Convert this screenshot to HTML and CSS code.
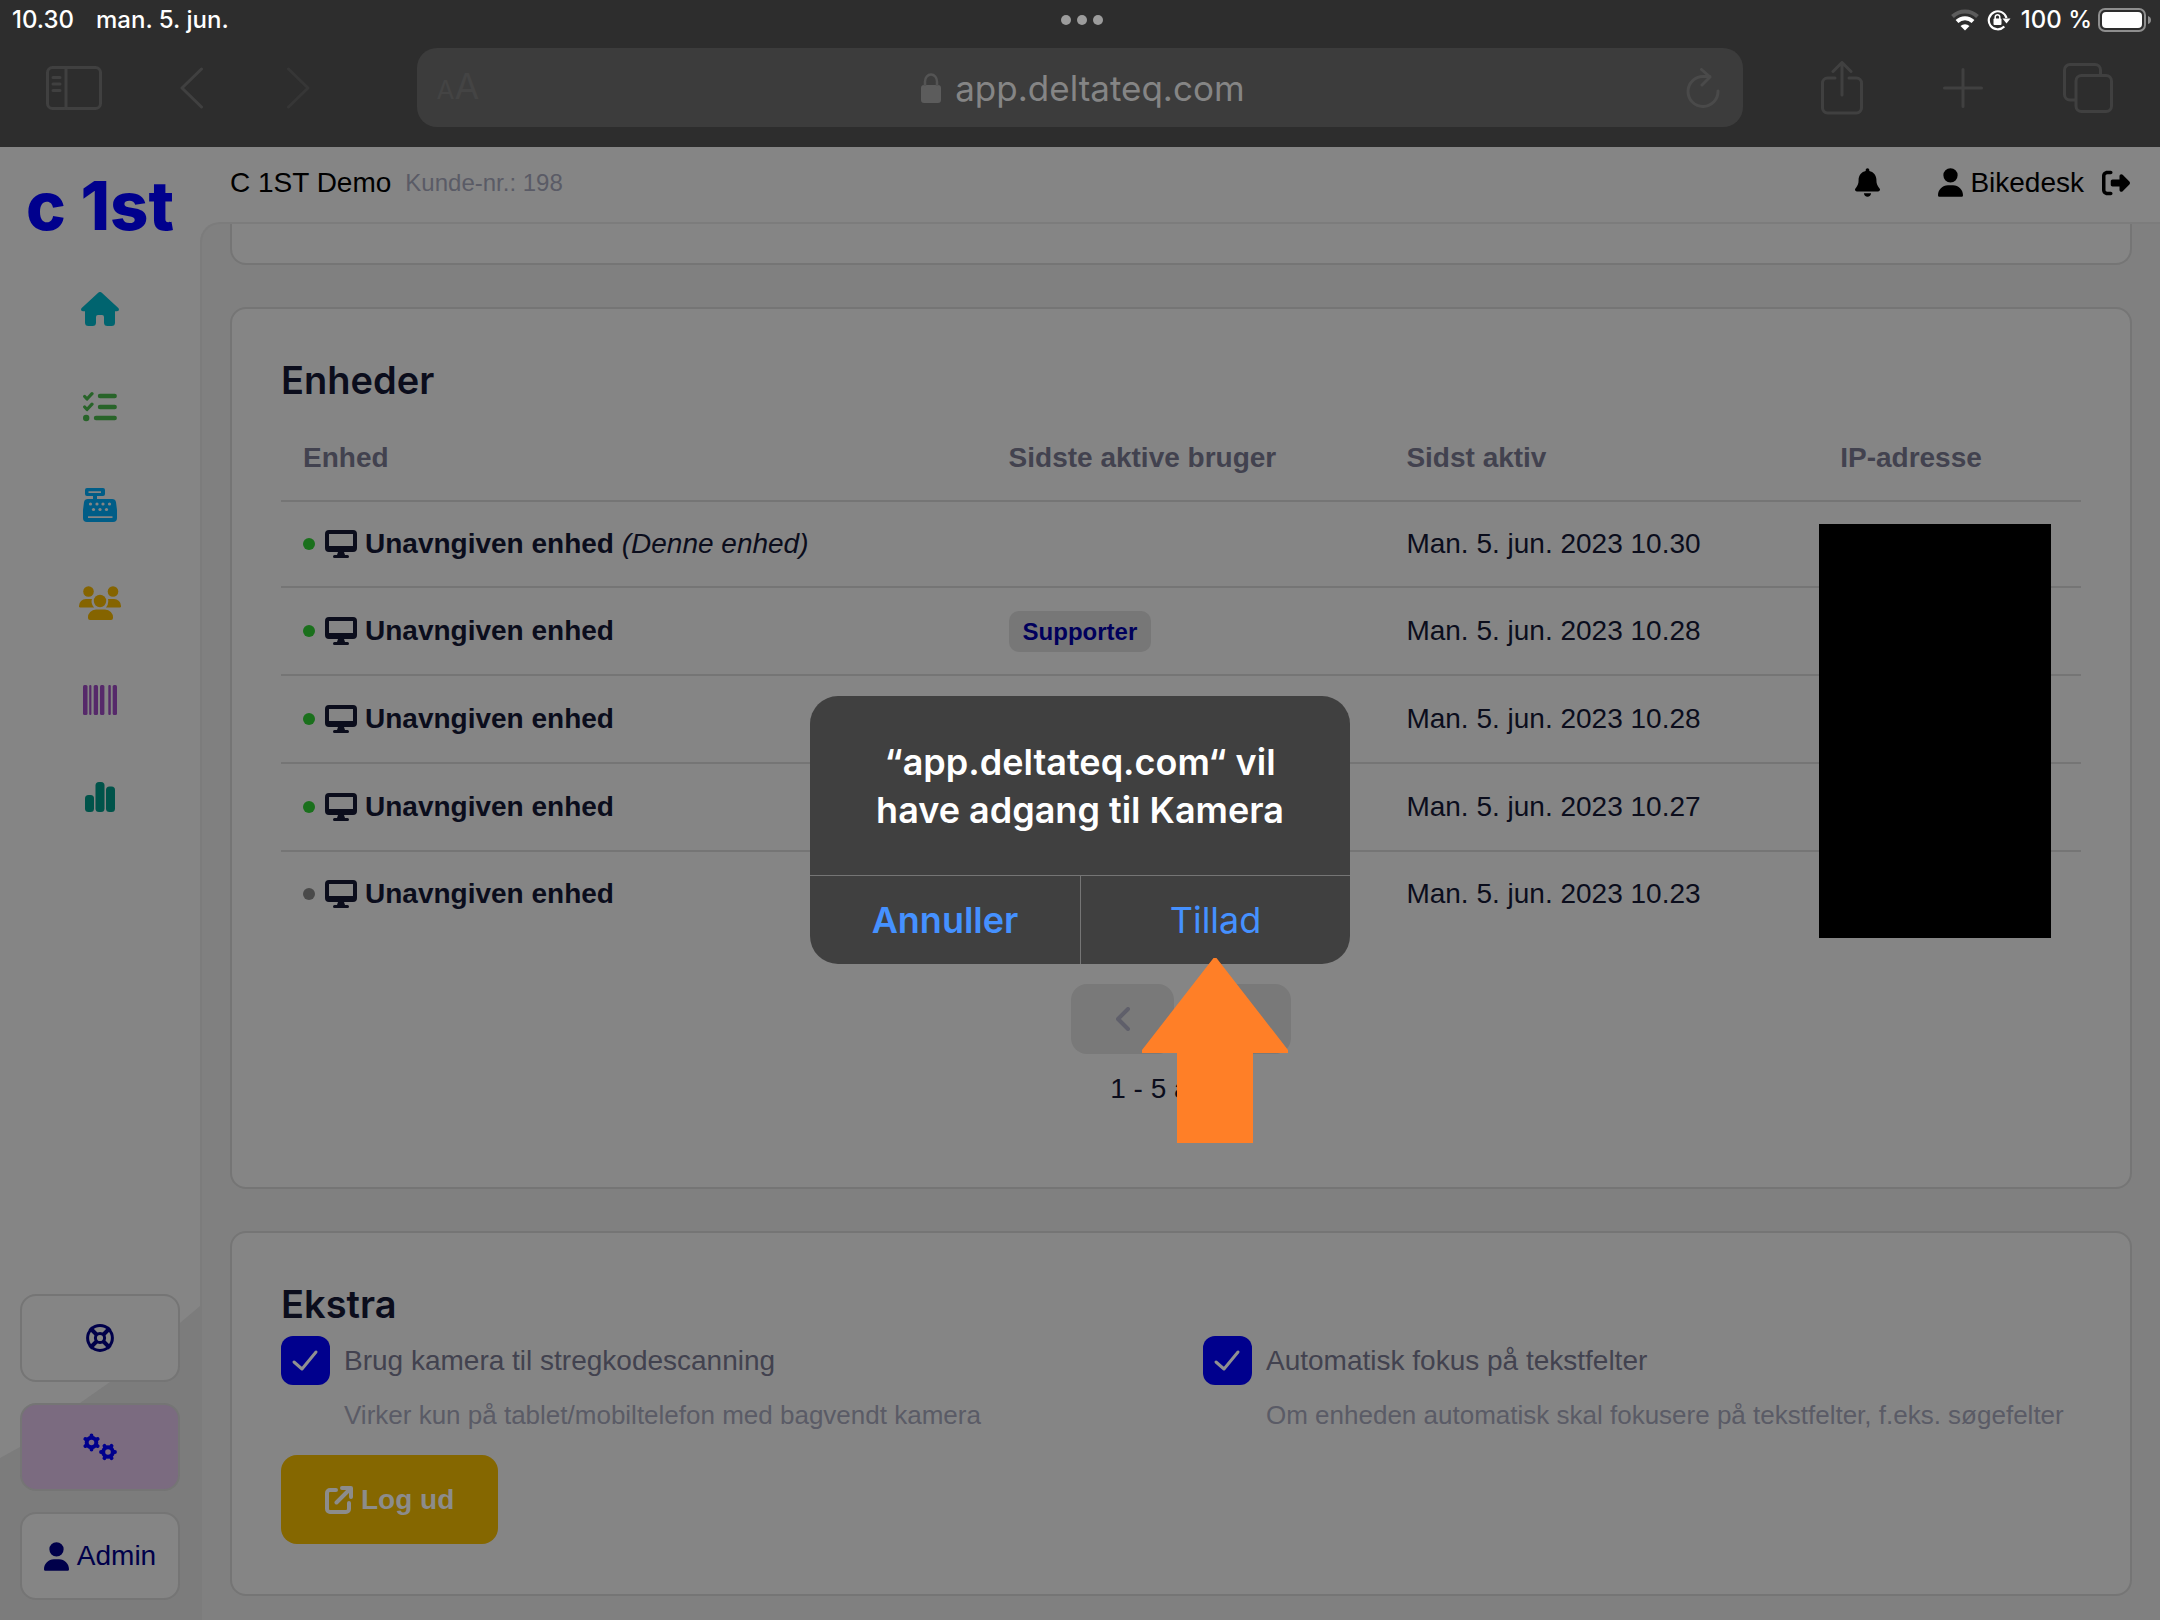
FILE: index.html
```html
<!DOCTYPE html>
<html lang="da">
<head>
<meta charset="utf-8">
<meta name="viewport" content="width=device-width, initial-scale=1">
<title>C 1ST Demo</title>
<link rel="stylesheet" href="styles.css">
</head>
<body>
<svg class="sprite" aria-hidden="true">
  <symbol id="user" viewBox="0 0 448 512"><path d="M224 256A128 128 0 1 0 224 0a128 128 0 1 0 0 256zm-45.700 48C79.800 304 0 383.800 0 482.300C0 498.700 13.300 512 29.700 512H418.300c16.400 0 29.700-13.300 29.700-29.700C448 383.800 368.200 304 269.700 304H178.300z"/></symbol>
  <symbol id="monitor" viewBox="0 0 32 28"><path fill-rule="evenodd" d="M4 0H28a4 4 0 0 1 4 4V18a4 4 0 0 1-4 4H19l1 3h2.500a1.500 1.500 0 0 1 0 3h-13a1.500 1.500 0 0 1 0-3H12l1-3H4a4 4 0 0 1-4-4V4a4 4 0 0 1 4-4ZM4 4V16H28V4Z"/></symbol>
</svg>

<header class="browser">
  <div class="status">
    <div class="status-side"><span>10.30</span><span>man. 5. jun.</span></div>
    <svg class="dots" viewBox="0 0 42 10"><circle cx="5" cy="5" r="5"/><circle cx="21" cy="5" r="5"/><circle cx="37" cy="5" r="5"/></svg>
    <div class="status-side status-right">
      <svg width="28" height="22" viewBox="0 0 28 22"><path d="M1.500 7.500a18 18 0 0 1 25 0" fill="none" stroke="#5c5c5c" stroke-width="4"/><path d="M6 12.500a11.500 11.500 0 0 1 16 0" fill="none" stroke="#fff" stroke-width="4"/><path d="M9.500 17a6.500 6.500 0 0 1 9 0L14 21.500Z" fill="#fff"/></svg>
      <svg width="24" height="22" viewBox="0 0 24 22"><path d="M17.300 17.500A9 9 0 1 1 19.500 9" fill="none" stroke="#fff" stroke-width="2.200"/><path d="M15.500 9.500h8L19.500 14.500Z" fill="#fff"/><rect x="6.500" y="9.500" width="8" height="6.500" rx="1" fill="#fff"/><path d="M8.200 10V8a2.300 2.300 0 0 1 4.600 0v2" fill="none" stroke="#fff" stroke-width="1.500"/></svg>
      <span class="percent">100 %</span>
      <svg width="54" height="24" viewBox="0 0 54 24"><rect x="1" y="1" width="46" height="22" rx="6" fill="none" stroke="#8e8e8e" stroke-width="2"/><rect x="4" y="4" width="40" height="16" rx="4" fill="#fff"/><path d="M50 8q3 1 3 4t-3 4Z" fill="#8e8e8e"/></svg>
    </div>
  </div>
  <div class="toolbar">
    <div class="tools tools-left">
      <button class="tool" aria-label="Sidebjælke"><svg width="56" height="44" viewBox="0 0 56 44"><rect x="1.500" y="1.500" width="53" height="41" rx="5"/><path d="M20 2V42M7 11.500h7M7 18h7M7 24.500h7"/></svg></button>
      <button class="tool" aria-label="Tilbage"><svg width="26" height="42" viewBox="0 0 26 42"><path d="M21.500 2 2 21 21.500 40"/></svg></button>
      <button class="tool faint" aria-label="Frem"><svg width="26" height="42" viewBox="0 0 26 42"><path d="M4.500 2 24 21 4.500 40"/></svg></button>
    </div>
    <div class="address">
      <button class="aa" aria-label="Tekststørrelse"><span>A</span><span class="aa-big">A</span></button>
      <label class="url"><svg width="20" height="30" viewBox="0 0 20 30"><rect y="12" width="20" height="18" rx="3" fill="#5c5c5c"/><path d="M4 13V8.500a6 7 0 0 1 12 0V13" fill="none" stroke="#545454" stroke-width="2.500"/></svg><input type="text" value="app.deltateq.com" aria-label="Adresse"></label>
      <button class="tool reload" aria-label="Genindlæs"><svg width="34" height="40" viewBox="0 0 34 40"><path d="M32 23A15 15 0 1 1 17 8.500h7M15.500 1.500 24 9l-8 8"/></svg></button>
    </div>
    <div class="tools tools-right">
      <button class="tool" aria-label="Del"><svg width="42" height="54" viewBox="0 0 42 54"><path d="M14 17H6.500a5 5 0 0 0-5 5V47a5 5 0 0 0 5 5h29a5 5 0 0 0 5-5V22a5 5 0 0 0-5-5H28M21 34V2M12 10.500 21 1.500l9 9"/></svg></button>
      <button class="tool" aria-label="Ny fane"><svg width="40" height="40" viewBox="0 0 40 40"><path d="M20 1.500V38.500M1.500 20H38.500"/></svg></button>
      <button class="tool" aria-label="Faner"><svg width="50" height="50" viewBox="0 0 50 50"><path d="M12 37H7a5.500 5.500 0 0 1-5.500-5.500V7A5.500 5.500 0 0 1 7 1.500H32A5.500 5.500 0 0 1 37.500 7v4"/><rect x="13" y="12.500" width="35.500" height="36" rx="5.500"/></svg></button>
    </div>
  </div>
</header>

<div class="app">
  <aside class="sidebar">
    <a class="logo" href="#">c 1st</a>
    <nav class="nav">
      <a href="#" aria-label="Hjem"><svg width="38" height="34" viewBox="0 0 38 34" fill="#00646f"><path d="M17.500.6a2.300 2.300 0 0 1 3 0L37.300 16c1.300 1.300.6 3.200-1.300 3.200H34V30.500A3.500 3.500 0 0 1 30.500 34h-4A3.500 3.500 0 0 1 23 30.500V25a2 2 0 0 0-2-2H17a2 2 0 0 0-2 2v5.500A3.500 3.500 0 0 1 11.500 34h-4A3.500 3.500 0 0 1 4 30.500V19.200H2C.1 19.200-.6 17.300.7 16Z"/></svg></a>
      <a href="#" aria-label="Opgaver"><svg width="34" height="30" viewBox="0 0 34 30" fill="none" stroke="#286429" stroke-linecap="round" stroke-linejoin="round"><path stroke-width="3.200" d="M1.700 4.500 4 7l5-5.300M1.700 15 4 17.500 9 12.200"/><path stroke-width="4.400" d="M17 4H31.700M17 15H31.700M13 26H31.700"/><circle cx="3.200" cy="26" r="3.200" fill="#286429" stroke="none"/></svg></a>
      <a href="#" aria-label="Kasse"><svg width="34" height="34" viewBox="0 0 34 34"><path fill="#005d87" fill-rule="evenodd" d="M4 0H20a2 2 0 0 1 2 2V6a2 2 0 0 1-2 2H14v3H29a4 4 0 0 1 4 3.300L34 22v8a4 4 0 0 1-4 4H4a4 4 0 0 1-4-4V22L1 14.300A4 4 0 0 1 5 11H10V8H4A2 2 0 0 1 2 6V2A2 2 0 0 1 4 0ZM5.500 3.200V5H18V3.200ZM5 28.300V30H29.500V28.300Z"/><g fill="#858585"><circle cx="7.500" cy="16" r="1.600"/><circle cx="14" cy="16" r="1.600"/><circle cx="20" cy="16" r="1.600"/><circle cx="26.500" cy="16" r="1.600"/><circle cx="10.500" cy="21.500" r="1.600"/><circle cx="17" cy="21.500" r="1.600"/><circle cx="23.500" cy="21.500" r="1.600"/></g></svg></a>
      <a href="#" aria-label="Kunder"><svg width="42" height="34" viewBox="0 0 42 34" fill="#856400"><circle cx="9.500" cy="5.500" r="5.300"/><circle cx="34" cy="5.500" r="5.300"/><circle cx="21" cy="15" r="6.200"/><path d="M7 13h6a7 7 0 0 0 0 5q.7 2 2.200 3.500H1.300A1.300 1.300 0 0 1 0 20a7 7 0 0 1 7-7ZM29 13h6a7 7 0 0 1 7 7a1.300 1.300 0 0 1-1.300 1.500H27Q30 18 29 13ZM17 23.500h9a8 8 0 0 1 8 8.500a2 2 0 0 1-2 2H11a2 2 0 0 1-2-2a8 8 0 0 1 8-8.500Z"/></svg></a>
      <a href="#" aria-label="Varer"><svg width="34" height="30" viewBox="0 0 34 30" fill="#56296a"><rect width="4.500" height="30" rx="1.500"/><rect x="6.200" width="2.200" height="30" rx="1"/><rect x="10.700" width="4.300" height="30" rx="1.500"/><rect x="17" width="4.400" height="30" rx="1.500"/><rect x="25.300" width="2.500" height="30" rx="1"/><rect x="29.700" width="4.300" height="30" rx="1.500"/></svg></a>
      <a href="#" aria-label="Rapporter"><svg width="30" height="30" viewBox="0 0 30 30" fill="#00534a"><rect y="13" width="9" height="17" rx="3.500"/><rect x="10.500" width="9" height="30" rx="3.500"/><rect x="21" y="4.500" width="9" height="25.500" rx="3.500"/></svg></a>
    </nav>
    <div class="side-actions">
      <button class="side-btn" aria-label="Hjælp"><svg width="28" height="28" viewBox="0 0 28 28" fill="none" stroke="#00004a" stroke-width="3"><circle cx="14" cy="14" r="12.400"/><circle cx="14" cy="14" r="4.600"/><path stroke-width="4" d="M4 4l6.500 6.500M24 4l-6.500 6.500M4 24l6.500-6.500M24 24l-6.500-6.500"/></svg></button>
      <button class="side-btn active" aria-label="Indstillinger"><svg width="36" height="28" viewBox="0 0 36 28" fill="none" stroke="#00008d"><g stroke-width="4"><circle cx="9.500" cy="9.500" r="4.800"/><circle cx="26" cy="19" r="4.800"/></g><path stroke-width="3.800" stroke-linecap="round" d="M9.500 3.500V2.500M9.500 15.500v1M4.300 6.500l-1-.6M14.700 12.500l1 .6M4.300 12.500l-1 .6M14.700 6.500l1-.6M20 19H19M32 19h1M23 13.800l-.6-1M29 24.200l.6 1M29 13.800l.6-1M23 24.200l-.6 1"/></svg></button>
      <button class="side-btn"><svg width="25" height="29" fill="#00004a"><use href="#user"/></svg>Admin</button>
    </div>
  </aside>

  <div class="page">
    <header class="topbar">
      <span class="shop">C 1ST Demo</span><span class="customer">Kunde-nr.: 198</span>
      <div class="account">
        <button class="icon-btn" aria-label="Notifikationer"><svg width="25" height="29" viewBox="0 0 448 512"><path d="M224 0c-17.700 0-32 14.300-32 32V51.200C119 66 64 130.600 64 208v18.800c0 47-17.300 92.400-48.500 127.600l-7.400 8.300c-8.400 9.400-10.400 22.900-5.300 34.400S19.400 416 32 416H416c12.600 0 24-7.400 29.200-18.900s3.100-25-5.300-34.400l-7.400-8.300C401.300 319.200 384 273.900 384 226.800V208c0-77.400-55-142-128-156.800V32c0-17.700-14.300-32-32-32zm45.300 493.300c12-12 18.700-28.300 18.700-45.300H224 160c0 17 6.700 33.300 18.700 45.300s28.300 18.700 45.300 18.700s33.300-6.700 45.300-18.700z"/></svg></button>
        <a class="profile" href="#"><svg width="25" height="29"><use href="#user"/></svg>Bikedesk</a>
        <button class="icon-btn" aria-label="Log ud"><svg width="28" height="28" viewBox="0 0 512 512"><path d="M377.900 105.900L500.700 228.700c7.200 7.200 11.300 17.100 11.300 27.300s-4.100 20.100-11.300 27.300L377.900 406.100c-6.400 6.400-15 9.900-24 9.900c-18.700 0-33.900-15.200-33.900-33.900l0-62.100-128 0c-17.700 0-32-14.300-32-32l0-64c0-17.700 14.300-32 32-32l128 0 0-62.100c0-18.700 15.200-33.900 33.900-33.900c9 0 17.600 3.600 24 9.900zM160 96L96 96c-17.700 0-32 14.300-32 32l0 256c0 17.700 14.300 32 32 32l64 0c17.700 0 32 14.300 32 32s-14.300 32-32 32l-64 0c-53 0-96-43-96-96L0 128C0 75 43 32 96 32l64 0c17.700 0 32 14.300 32 32s-14.300 32-32 32z"/></svg></button>
      </div>
    </header>

    <main class="content">
      <section class="card card-tail"></section>

      <section class="card devices">
        <h2>Enheder</h2>
        <div class="table-wrap">
          <table>
            <colgroup><col class="c-device"><col class="c-user"><col class="c-seen"><col></colgroup>
            <thead><tr><th>Enhed</th><th>Sidste aktive bruger</th><th>Sidst aktiv</th><th>IP-adresse</th></tr></thead>
            <tbody>
              <tr><td><div class="device"><i class="dot"></i><svg width="32" height="28"><use href="#monitor"/></svg><span><b>Unavngiven enhed</b> <em>(Denne enhed)</em></span></div></td><td></td><td>Man. 5. jun. 2023 10.30</td><td></td></tr>
              <tr><td><div class="device"><i class="dot"></i><svg width="32" height="28"><use href="#monitor"/></svg><b>Unavngiven enhed</b></div></td><td><span class="badge">Supporter</span></td><td>Man. 5. jun. 2023 10.28</td><td></td></tr>
              <tr><td><div class="device"><i class="dot"></i><svg width="32" height="28"><use href="#monitor"/></svg><b>Unavngiven enhed</b></div></td><td></td><td>Man. 5. jun. 2023 10.28</td><td></td></tr>
              <tr><td><div class="device"><i class="dot"></i><svg width="32" height="28"><use href="#monitor"/></svg><b>Unavngiven enhed</b></div></td><td></td><td>Man. 5. jun. 2023 10.27</td><td></td></tr>
              <tr><td><div class="device"><i class="dot off"></i><svg width="32" height="28"><use href="#monitor"/></svg><b>Unavngiven enhed</b></div></td><td></td><td>Man. 5. jun. 2023 10.23</td><td></td></tr>
            </tbody>
          </table>
          <div class="redaction"></div>
        </div>
        <div class="pager">
          <button aria-label="Forrige"><svg width="14" height="24" viewBox="0 0 14 24"><path d="M12 2 2 12l10 10"/></svg></button>
          <button aria-label="Næste"><svg width="14" height="24" viewBox="0 0 14 24"><path d="M2 2l10 10L2 22"/></svg></button>
        </div>
        <p class="count">1 - 5 af 100</p>
      </section>

      <section class="card extra">
        <h2>Ekstra</h2>
        <div class="options">
          <div class="option">
            <input type="checkbox" id="camera" checked>
            <label for="camera">Brug kamera til stregkodescanning</label>
            <p>Virker kun på tablet/mobiltelefon med bagvendt kamera</p>
          </div>
          <div class="option">
            <input type="checkbox" id="focus" checked>
            <label for="focus">Automatisk fokus på tekstfelter</label>
            <p>Om enheden automatisk skal fokusere på tekstfelter, f.eks. søgefelter</p>
          </div>
        </div>
        <button class="logout"><svg width="28" height="28" viewBox="0 0 28 28"><path d="M11 4H5a3 3 0 0 0-3 3V23a3 3 0 0 0 3 3H21a3 3 0 0 0 3-3V17M17 2h9v9M25.500 2.500 11.500 16.500"/></svg>Log ud</button>
      </section>
    </main>
  </div>
</div>

<div class="alert" role="alertdialog" aria-labelledby="alert-title">
  <h1 id="alert-title">“app.deltateq.com“ vil<br>have adgang til Kamera</h1>
  <div class="alert-actions"><button class="cancel">Annuller</button><button class="allow">Tillad</button></div>
  <svg class="pointer" width="146" height="186" viewBox="0 0 146 186"><path d="M71.500 0h3L146 92v3H111V185H35V95H0V92Z"/></svg>
</div>
</body>
</html>
```
FILE: styles.css
```css
* { box-sizing: border-box; }

body {
  margin: 0;
  min-height: 100vh;
  position: relative;
  display: flex;
  flex-direction: column;
  background: #808080;
  color: #0b0d1c;
  font: 28px/32px "Liberation Sans", Arial, sans-serif;
}

svg { display: block; flex: none; }
h1, h2, p { margin: 0; }
a { color: inherit; text-decoration: none; }
button, input {
  margin: 0;
  padding: 0;
  border: 0;
  background: none;
  color: inherit;
  font: inherit;
}
.sprite { position: absolute; width: 0; height: 0; }

/* Browser chrome */
.browser {
  height: 147px;
  background: #2d2d2d;
  font-family: Inter, sans-serif;
}
.status {
  height: 40px;
  padding: 0 8px 0 12px;
  display: flex;
  align-items: center;
  color: #fff;
  font-size: 24px;
  font-weight: 500;
}
.status-side { flex: 1; display: flex; align-items: center; gap: 22px; }
.status-right { justify-content: flex-end; gap: 8px; }
.percent { margin: 0 -2px 0 2px; }
.dots { width: 42px; fill: #9c9c9c; }
.toolbar {
  padding: 8px 47px 0 46px;
  display: flex;
  align-items: center;
}
.tools { flex: 1; display: flex; align-items: center; }
.tools-left { gap: 78px; }
.tools-right { justify-content: flex-end; gap: 80px; }
.tool svg { fill: none; stroke: #404040; stroke-width: 3; stroke-linecap: round; stroke-linejoin: round; }
.tool.faint svg { stroke: #363636; }
.tool.reload svg { stroke: #4a4a4a; }
.address {
  width: 1326px;
  height: 79px;
  padding: 0 22px 0 20px;
  border-radius: 20px;
  display: flex;
  align-items: center;
  justify-content: space-between;
  background: #3c3c3c;
}
.aa { display: flex; align-items: baseline; color: #444; font-size: 26px; }
.aa-big { font-size: 36px; }
.url { display: flex; align-items: center; gap: 14px; color: #858585; font-size: 35px; }
.url input { field-sizing: content; line-height: 44px; }

/* App frame */
.app { flex: 1; display: flex; background: #858585; }
.sidebar {
  width: 200px;
  flex: none;
  padding: 19px 20px 20px;
  position: relative;
  display: flex;
  flex-direction: column;
}
.sidebar::before {
  content: "";
  position: absolute;
  inset: auto 0 0;
  height: 314px;
  background: #7c7c7c;
  clip-path: polygon(0 152px, 10% 141px, 40% 97px, 55% 76px, 100% 0, 100% 100%, 0 100%);
}
.logo {
  align-self: center;
  color: #00008d;
  font: 800 67px/80px Inter, sans-serif;
  white-space: nowrap;
}
.nav { margin-top: 14px; display: flex; flex-direction: column; }
.nav a { height: 98px; display: flex; align-items: center; justify-content: center; }
.nav a:nth-last-child(-n+3) { height: 97px; }
.side-actions { margin-top: auto; position: relative; display: flex; flex-direction: column; gap: 21px; }
.side-btn {
  height: 88px;
  border: 2px solid #757575;
  border-radius: 16px;
  display: flex;
  align-items: center;
  justify-content: center;
  gap: 8px;
  background: #858585;
  color: #00004a;
}
.side-btn.active { background: #7b6b80; }

.page { flex: 1; min-width: 0; display: flex; flex-direction: column; }
.topbar {
  height: 75px;
  padding: 0 30px 4px;
  display: flex;
  align-items: center;
  gap: 14px;
  color: #000;
}
.customer { color: #5a5b66; font-size: 24px; }
.account { margin-left: auto; display: flex; align-items: center; }
.profile { margin: 0 18px 0 58px; display: flex; align-items: center; gap: 7px; }

.content {
  flex: 1;
  padding: 0 28px 24px;
  border: solid #7c7c7c;
  border-width: 2px 0 0 2px;
  border-top-left-radius: 20px;
  display: flex;
  flex-direction: column;
  gap: 42px;
  background: #808080;
}
.card {
  border: 2px solid #757575;
  border-radius: 16px;
  padding: 47px 49px 50px;
  background: #858585;
}
.card-tail { height: 41px; padding: 0; border-top: 0; border-radius: 0 0 16px 16px; }
.devices { padding-bottom: 82px; }
h2 { font: 600 38px/48px Inter, sans-serif; }

/* Device list */
.table-wrap { position: relative; }
table { width: 100%; table-layout: fixed; border-collapse: separate; border-spacing: 0; }
.c-device { width: 39.2%; }
.c-user { width: 22.1%; }
.c-seen { width: 24.1%; }
th { padding: 38px 22px 26px; border-bottom: 2px solid #757575; text-align: left; color: #42424f; }
td { height: 88px; padding: 0 22px; border-bottom: 2px solid #757575; white-space: nowrap; }
tbody tr:first-child td { height: 86px; }
tbody tr:last-child td { height: 86px; padding-bottom: 2px; border-bottom: 0; }
.device { display: flex; align-items: center; gap: 8px; }
.dot { width: 12px; height: 12px; margin-right: 2px; border-radius: 50%; background: #1a701c; }
.dot.off { background: #4a4a4a; }
.device svg { fill: #0b0d1c; }
.badge {
  display: inline-block;
  padding: 5px 14px 4px;
  border-radius: 10px;
  background: #777;
  color: #00005c;
  font-size: 24px;
  font-weight: 700;
}
.redaction { position: absolute; top: 120px; right: 30px; bottom: 0; width: 232px; background: #000; }

.pager { margin-top: 46px; display: flex; justify-content: center; gap: 14px; }
.pager button { width: 103px; height: 70px; border-radius: 16px; display: grid; place-items: center; background: #797979; }
.pager svg { fill: none; stroke: #5f5f6a; stroke-width: 4; stroke-linecap: round; stroke-linejoin: round; }
.count { margin-top: 19px; text-align: center; }

/* Extra settings */
.options { margin-top: 8px; display: grid; grid-template-columns: 1fr 1fr; column-gap: 44px; }
.option { display: grid; grid-template-columns: 49px 1fr; column-gap: 14px; row-gap: 14px; align-items: center; }
.option input {
  appearance: none;
  width: 49px;
  height: 49px;
  border-radius: 12px;
  background: #00008d url("data:image/svg+xml,%3Csvg xmlns='http://www.w3.org/2000/svg' viewBox='0 0 49 49'%3E%3Cpath d='M13 26l8 7 14-17' fill='none' stroke='%23909090' stroke-width='3' stroke-linecap='round' stroke-linejoin='round'/%3E%3C/svg%3E");
}
.option label { color: #42424f; }
.option p { grid-column: 2; color: #5a5b66; font-size: 26px; white-space: nowrap; }
.logout {
  margin-top: 24px;
  height: 89px;
  padding: 0 44px;
  border-radius: 16px;
  display: flex;
  align-items: center;
  gap: 8px;
  background: #856700;
  color: #8c8c8c;
  font-weight: 700;
}
.logout svg { fill: none; stroke: #8c8c8c; stroke-width: 4; stroke-linecap: round; stroke-linejoin: round; }

/* Permission prompt */
.alert {
  position: absolute;
  top: 696px;
  left: 0;
  right: 0;
  width: 540px;
  margin: 0 auto;
  border-radius: 28px;
  background: #404040;
  color: #fff;
  font-family: Inter, sans-serif;
}
.alert h1 { padding: 42px 20px 41px; font-size: 36px; line-height: 48px; font-weight: 600; text-align: center; }
.alert-actions { display: grid; grid-template-columns: 1fr 1fr; border-top: 1px solid #757575; }
.alert-actions button { height: 88px; color: #4591ff; font-size: 36px; }
.alert-actions .cancel { font-weight: 600; }
.alert-actions .allow { border-left: 1px solid #757575; }
.pointer { position: absolute; top: 262px; right: 62px; fill: #ff7f27; }
```
